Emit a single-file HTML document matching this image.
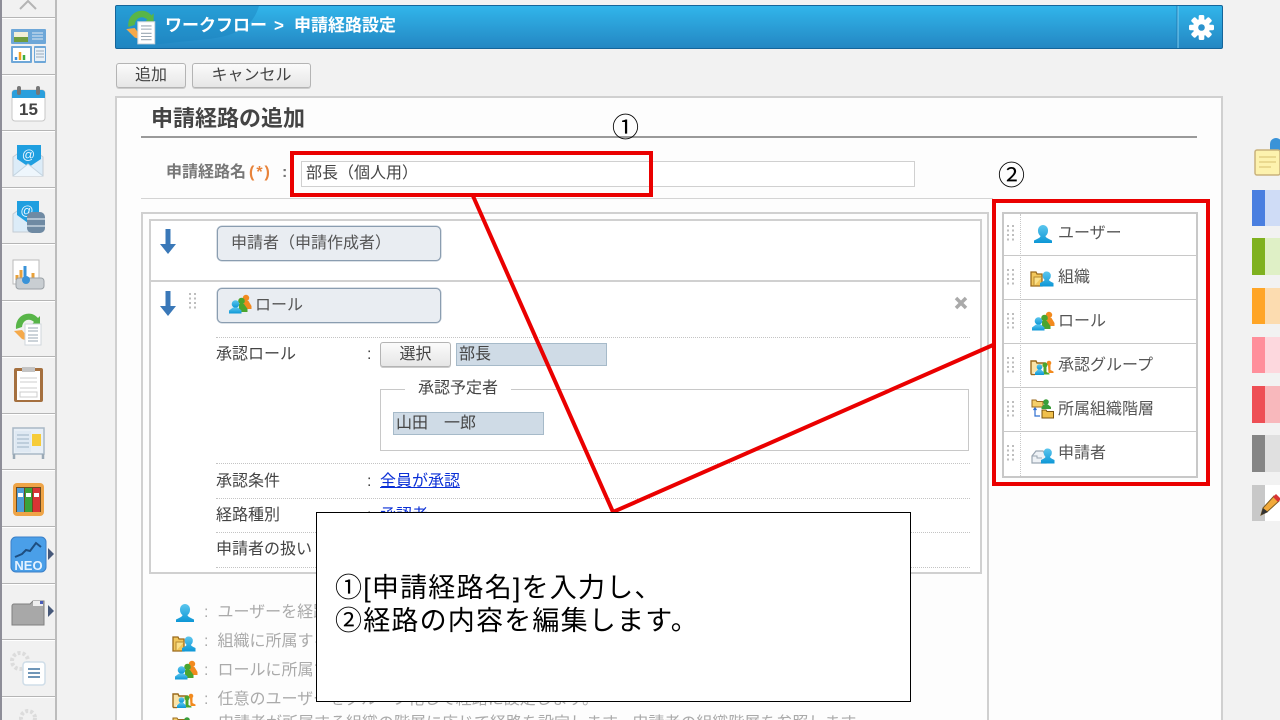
<!DOCTYPE html>
<html lang="ja">
<head>
<meta charset="utf-8">
<title>申請経路設定</title>
<style>
html,body{margin:0;padding:0;width:1280px;height:720px;overflow:hidden;background:#f2f2f2}
body{position:relative;font-family:"Liberation Sans","Noto Sans CJK JP",sans-serif;color:#444;font-size:16px}
.a{position:absolute;white-space:nowrap}
.t{position:absolute;white-space:nowrap;line-height:20px}
.sep{position:absolute;left:2px;width:53px;height:1px;background:#b5b5b5;box-shadow:0 1px 0 #fff}
.btn{position:absolute;box-sizing:border-box;border:1px solid #b4b4b4;border-radius:3px;background:linear-gradient(#fbfbfb,#e6e6e6);text-align:center;color:#444;box-shadow:0 1px 0 #ccc}
.dot{position:absolute;left:0;right:0;height:0;border-top:1px dotted #c4c4c4}
.chip{position:absolute;box-sizing:border-box;left:217px;width:224px;height:35px;background:#e9edf2;border:1px solid #8a9db0;border-radius:5px;box-shadow:0 0 0 .5px #b7c3cf}
.val{position:absolute;box-sizing:border-box;background:#cfdbe6;border:1px solid #a6bac9;height:23px;line-height:21px;padding-left:2px;color:#444;white-space:nowrap}
.row{position:absolute;left:1002px;width:195px;box-sizing:border-box;height:44px;border-bottom:1px solid #c8c8c8}
.row span{position:absolute;left:56px;top:11px;line-height:22px;font-size:16px;color:#555;white-space:nowrap}
.note{position:absolute;left:204px;font-size:16px;line-height:20px;color:#aaa;white-space:nowrap}
.note b{font-weight:normal;margin-left:9px}
svg{position:absolute;overflow:visible}
</style>
</head>
<body>
<svg width="0" height="0" style="position:absolute">
<defs>
<linearGradient id="bl" x1="0" y1="0" x2="0" y2="1"><stop offset="0" stop-color="#5cc6ee"/><stop offset="1" stop-color="#0d97d6"/></linearGradient>
<symbol id="user" viewBox="0 0 20 20"><path d="M10 1a5 5.500 0 0 1 5 6c0 2-1 4-2.500 5 0 1 1 2 6.500 4.500V19H1v-2.500c5.500-2.500 6.500-3.500 6.500-4.500C6 11 5 9 5 7a5 5.500 0 0 1 5-6z" fill="url(#bl)"/></symbol>
<symbol id="org" viewBox="0 0 24 20"><path d="M1 18V4h5l1 2h5v12z" fill="#f2c75c" stroke="#9a6a1c" stroke-width="1.300"/><path d="M4 18V9h8" fill="#fbe08a" stroke="#b58a30"/><path d="M17 3.500a3.800 4 0 0 1 3.800 4.500c0 1.500-.8 3-1.800 3.700 0 .8.700 1.500 4.500 3.300V18.500H10V15c3.800-1.800 4.500-2.500 4.500-3.300-1-.7-1.800-2.200-1.800-3.700A3.800 4 0 0 1 17 3.500z" fill="url(#bl)"/></symbol>
<symbol id="role" viewBox="0 0 24 20"><circle cx="18" cy="4" r="3.200" fill="#f28a1e"/><path d="M15.500 7h5l3 5v3h-8z" fill="#f28a1e"/><circle cx="13.500" cy="7" r="3.300" fill="#4aa52e"/><path d="M11 10h5l3.500 5v3H11z" fill="#4aa52e"/><circle cx="7.500" cy="10" r="3.800" fill="url(#bl)"/><path d="M5 13.500h5l3.500 3V19.500H1v-3z" fill="url(#bl)"/></symbol>
<symbol id="grp" viewBox="0 0 24 20"><path d="M1 18.500V5h5l1 2h8v3" fill="#f9e3a8" stroke="#9a6a1c" stroke-width="1.400"/><path d="M1 18.500h4" stroke="#9a6a1c" stroke-width="1.400"/><circle cx="19" cy="7" r="2.300" fill="#f28a1e"/><path d="M18 9h2.500v5l3 1.500V17h-5z" fill="#f28a1e"/><circle cx="15" cy="9" r="2.500" fill="#4aa52e"/><path d="M13.500 11h3v5l3 1.500v1h-6z" fill="#4aa52e"/><circle cx="9.500" cy="11" r="2.800" fill="url(#bl)"/><path d="M8 13.500h3l3 3v2.500H5v-2.500z" fill="url(#bl)"/></symbol>
<symbol id="hier" viewBox="0 0 24 22"><path d="M1 9V2h4l1 1.500h6V9z" fill="#f5cf6a" stroke="#9a6a1c"/><circle cx="15" cy="4" r="2.800" fill="#3a9e3a"/><path d="M13 6.500h4l3 2.500v2H10.500V9z" fill="#3a9e3a"/><path d="M4 10v8h5M2.500 12L4 10l1.500 2" fill="none" stroke="#2f6fd0" stroke-width="1.200"/><path d="M11 20v-8h4l1 1.500h6.500V20z" fill="#f0c04c" stroke="#7a5410"/></symbol>
<symbol id="appl" viewBox="0 0 24 20"><path d="M1 18v-7l4-5h7l3 5v7z" fill="#eef2f6" stroke="#9aa6b2" stroke-width="1.200"/><path d="M1 11h5v2h5" fill="none" stroke="#9aa6b2"/><path d="M17 3.500a3.800 4 0 0 1 3.800 4.500c0 1.500-.8 3-1.800 3.700 0 .8.700 1.500 4.500 3.300V18.500H10V15c3.800-1.800 4.500-2.500 4.500-3.300-1-.7-1.800-2.200-1.800-3.700A3.800 4 0 0 1 17 3.500z" fill="url(#bl)"/></symbol>
<symbol id="drag" viewBox="0 0 9 16"><g fill="#bdbdbd"><rect x="0" y="0" width="2" height="2"/><rect x="5" y="0" width="2" height="2"/><rect x="0" y="4.500" width="2" height="2"/><rect x="5" y="4.500" width="2" height="2"/><rect x="0" y="9" width="2" height="2"/><rect x="5" y="9" width="2" height="2"/><rect x="0" y="13.500" width="2" height="2"/><rect x="5" y="13.500" width="2" height="2"/></g></symbol>
<symbol id="down" viewBox="0 0 18 26"><path d="M6.500 0h5v15H17L9 25 1 15h5.500z" fill="#3a78b8"/></symbol>
<symbol id="wf" viewBox="0 0 30 36"><path d="M3 18C2 7 11 1 19 3c3 1 5 3 6 4l2-2v9h-9l3-3c-4-4-11-3-12 5z" fill="#58b548"/><path d="M1 20l8-1 4 5 2 6-6-2z" fill="#f5a94a"/><path d="M12 13h16v21H12z" fill="#fff" stroke="#d0d6dc"/><path d="M15 17h10M15 20h10M15 24h10M15 27h10M15 30h10" stroke="#9aa7b3"/></symbol>
</defs>
</svg>

<!-- left rail -->
<div class="a" style="left:0;top:0;width:2px;height:720px;background:#8e8e98"></div>
<div class="a" style="left:2px;top:0;width:53px;height:720px;background:#f1f1f1"></div>
<div class="a" style="left:55px;top:0;width:2px;height:720px;background:#bcbcbc"></div>
<div class="sep" style="top:17px"></div><div class="sep" style="top:74px"></div><div class="sep" style="top:130px"></div><div class="sep" style="top:187px"></div><div class="sep" style="top:243px"></div><div class="sep" style="top:300px"></div><div class="sep" style="top:356px"></div><div class="sep" style="top:413px"></div><div class="sep" style="top:469px"></div><div class="sep" style="top:526px"></div><div class="sep" style="top:583px"></div><div class="sep" style="top:639px"></div><div class="sep" style="top:696px"></div>

<svg style="left:0;top:0" width="57" height="720" viewBox="0 0 57 720">
<path d="M20 9l8-8 8 8" fill="none" stroke="#b4b4b4" stroke-width="2"/>
<!-- portal -->
<rect x="11" y="29" width="35" height="15" rx="1" fill="#6ea7d8"/><rect x="14" y="32" width="14" height="10" fill="#6f9d3e"/><rect x="14" y="32" width="14" height="5" fill="#f2efd8"/><path d="M32 33h11M32 36h11M32 39h11" stroke="#dde9f4"/>
<rect x="11" y="46" width="21" height="17" rx="1" fill="#6ea7d8"/><rect x="13" y="48" width="17" height="13" fill="#fff"/><path d="M16 60v-3" stroke-width="2.500" stroke="#3a8fdc"/><path d="M20 60v-8" stroke="#f0a020" stroke-width="2.500"/><path d="M24 60v-5" stroke="#3fae3f" stroke-width="2.500"/>
<rect x="34" y="46" width="12" height="17" rx="1" fill="#6ea7d8"/><rect x="35" y="48" width="10" height="13" fill="#e8f0f7"/><path d="M36 51h8M36 54h8M36 57h8" stroke="#9ab"/>
<!-- calendar -->
<rect x="12" y="90" width="33" height="31" rx="3" fill="#fff" stroke="#c7c7c7"/><path d="M12 98v-5a3 3 0 0 1 3-3h27a3 3 0 0 1 3 3v5z" fill="#2b9fdc"/><rect x="17" y="86" width="4" height="9" rx="2" fill="#777"/><rect x="36" y="86" width="4" height="9" rx="2" fill="#777"/>
<text x="28.500" y="115" text-anchor="middle" font-family="Liberation Sans" font-size="17" font-weight="bold" fill="#444">15</text>
<!-- mail -->
<path d="M13 176v-19l15-11 15 11v19z" fill="#dcecf8" stroke="#c4ccd4"/><path d="M17 145h24v14l-12 8-12-8z" fill="#1f9fe0"/>
<text x="28.500" y="159" text-anchor="middle" font-family="Liberation Sans" font-size="13" fill="#e8f5ff">@</text>
<path d="M13 176l15-12 15 12" fill="#eef6fc" stroke="#c4d4e0"/>
<!-- mail db -->
<path d="M13 232v-18l15-11 10 8v21z" fill="#dcecf8" stroke="#c4ccd4"/><path d="M17 201h22v14l-11 8-11-8z" fill="#1f9fe0"/>
<text x="27" y="215" text-anchor="middle" font-family="Liberation Sans" font-size="13" fill="#e8f5ff">@</text>
<rect x="27" y="212" width="18" height="21" rx="5" fill="#6f8aa3"/><path d="M27 219h18M27 226h18" stroke="#c5d3df" stroke-width="1.500"/>
<!-- presentation -->
<rect x="13" y="260" width="26" height="24" fill="#fff" stroke="#bbb"/><path d="M17 280v-5M21 280v-10M33 280v-7" stroke="#e8a13a" stroke-width="3"/><path d="M25 280v-14" stroke="#3a93d8" stroke-width="3"/><rect x="16" y="278" width="28" height="11" rx="3" fill="#c9ced2" stroke="#9aa0a5"/><circle cx="26" cy="280" r="4" fill="#3a93d8"/>
<!-- workflow -->
<use href="#wf" x="13" y="311" width="30" height="36"/>
<!-- clipboard -->
<rect x="14" y="368" width="29" height="34" rx="2" fill="#a5703f"/><rect x="17" y="371" width="23" height="29" fill="#fff"/><rect x="22" y="367" width="13" height="5" fill="#c4c4c4"/><path d="M20 378h17M20 382h17M20 388h17" stroke="#ccc"/><rect x="20" y="392" width="17" height="5" fill="none" stroke="#ccc"/>
<!-- board -->
<rect x="13" y="428" width="31" height="26" fill="#e8eff6" stroke="#a9b8c6" stroke-width="1.500"/><path d="M15 431h16v21H15z" fill="#dfe9f3"/><path d="M17 435h12M17 439h12M17 443h12M17 447h12" stroke="#9db3c6"/><rect x="32" y="434" width="9" height="12" fill="#f6cc3a"/><path d="M14 454v5M43 454v5" stroke="#9aa9b6" stroke-width="2.500"/>
<!-- binders -->
<rect x="13" y="483" width="31" height="33" rx="4" fill="#eea447"/><rect x="16" y="487" width="25" height="25" fill="#6b4a20"/><rect x="17" y="488" width="7" height="24" fill="#4f9dd8"/><rect x="25" y="488" width="7" height="24" fill="#3aa23a"/><rect x="33" y="488" width="7" height="24" fill="#d83434"/><path d="M18 495h5M26 495h5M34 495h5" stroke="#fff" stroke-width="4"/>
<!-- neo -->
<rect x="11" y="537" width="35" height="35" rx="5" fill="#4a9fe8" stroke="#3a7fc8"/><path d="M15 557l7-3 4-4 4 1 6-8 5 4" fill="none" stroke="#1e4e80" stroke-width="2"/>
<text x="28.500" y="570" text-anchor="middle" font-family="Liberation Sans" font-size="13" font-weight="bold" fill="#e6f3ff">NEO</text>
<path d="M48 548l6 6-6 6z" fill="#47597a"/>
<!-- folder -->
<path d="M12 625v-19a2 2 0 0 1 2-2h16l3-3h11v24z" fill="#a8a8a8" stroke="#808080"/><rect x="33" y="601" width="10" height="5" fill="#eee"/><rect x="40" y="601" width="3" height="3" fill="#4a5cb8"/><path d="M48 605l6 6-6 6z" fill="#47597a"/>
<!-- settings list -->
<circle cx="20" cy="661" r="8" fill="none" stroke="#dcdcdc" stroke-width="4" stroke-dasharray="3 2"/><rect x="23" y="662" width="22" height="23" rx="3" fill="#fff" stroke="#cfdde8" stroke-width="1.500"/><path d="M28 669h12M28 673h12M28 677h12" stroke="#6f96b8" stroke-width="2"/>
<circle cx="28" cy="718" r="7" fill="none" stroke="#dcdcdc" stroke-width="4" stroke-dasharray="3 2"/>
</svg>

<!-- header -->
<div class="a" style="left:115px;top:5px;width:1108px;height:44px;box-sizing:border-box;border:1px solid #15659a;border-radius:2px;background:linear-gradient(#31b5ea,#2487c3);overflow:hidden">
  <svg style="left:0;top:0" width="1108" height="44"><path d="M0 0h143c-6 20-20 29-50 33-30 3-60 6-93 10z" fill="#1b82bf" opacity=".45"/><path d="M1062 0v44" stroke="#7fd0f2"/><path d="M1061 0v44" stroke="#1f7db5"/></svg>
</div>
<svg style="left:125px;top:8px" width="32" height="38"><use href="#wf" width="32" height="38"/></svg>
<div class="a" style="left:165px;top:14px;line-height:24px;font-size:17px;font-weight:bold;color:#fff">ワークフロー</div>
<div class="a" style="left:274px;top:14px;line-height:24px;font-size:17px;font-weight:bold;color:#fff">&gt;</div>
<div class="a" style="left:294px;top:14px;line-height:24px;font-size:17px;font-weight:bold;color:#fff">申請経路設定</div>
<svg style="left:1187px;top:13px" width="29" height="29" viewBox="-14.500 -14.500 29 29"><g fill="#fff"><circle r="8.500"/><g><rect x="-2.800" y="-12.500" width="5.600" height="25" rx="1.500"/><rect x="-2.800" y="-12.500" width="5.600" height="25" rx="1.500" transform="rotate(45)"/><rect x="-2.800" y="-12.500" width="5.600" height="25" rx="1.500" transform="rotate(90)"/><rect x="-2.800" y="-12.500" width="5.600" height="25" rx="1.500" transform="rotate(135)"/></g></g><circle r="3.300" fill="#2b93cd"/></svg>

<!-- toolbar -->
<div class="btn" style="left:116px;top:63px;width:70px;height:25px;line-height:24px;font-size:16px">追加</div>
<div class="btn" style="left:192px;top:63px;width:119px;height:25px;line-height:24px;font-size:16px">キャンセル</div>

<!-- panel -->
<div class="a" style="left:115px;top:96px;width:1108px;height:640px;box-sizing:border-box;border:2px solid #d0d0d0;background:#fdfdfd"></div>
<div class="t" style="left:151px;top:106px;font-size:22px;line-height:26px;font-weight:bold;color:#444">申請経路の追加</div>
<div class="a" style="left:141px;top:136px;width:1056px;height:2px;background:#9a9a9a"></div>
<div class="t" style="left:166px;top:163px;font-size:16px;font-weight:bold;color:#777">申請経路名</div>
<div class="t" style="left:249px;top:163px;font-size:16px;font-weight:bold;color:#e8833a;letter-spacing:2px">(*)</div>
<div class="t" style="left:282px;top:163px;font-size:16px;font-weight:bold;color:#777">:</div>
<div class="a" style="left:301px;top:161px;width:614px;height:26px;box-sizing:border-box;border:1px solid #d0d0d0;background:#fff;line-height:23px;padding-left:4px;font-size:16px;color:#444">部長（個人用）</div>
<div class="a" style="left:141px;top:198px;width:852px;height:1px;background:#d4d4d4"></div>

<!-- outer + inner flow boxes -->
<div class="a" style="left:141px;top:212px;width:848px;height:520px;box-sizing:border-box;border:2px solid #d0d0d0;border-bottom:0"></div>
<div class="a" style="left:149px;top:219px;width:833px;height:355px;box-sizing:border-box;border:2px solid #d0d0d0;background:#fff"></div>
<div class="a" style="left:151px;top:280px;width:829px;height:2px;background:#d0d0d0"></div>

<svg style="left:159px;top:229px" width="18" height="26"><use href="#down" width="18" height="26"/></svg>
<div class="chip" style="top:226px"><div class="t" style="left:13px;top:7px;font-size:16px;color:#555">申請者（申請作成者）</div></div>
<svg style="left:159px;top:291px" width="18" height="26"><use href="#down" width="18" height="26"/></svg>
<svg style="left:189px;top:293px" width="9" height="16"><use href="#drag" width="9" height="16"/></svg>
<div class="chip" style="top:288px"><svg style="left:10px;top:5px" width="24" height="20"><use href="#role" width="24" height="20"/></svg><div class="t" style="left:37px;top:7px;font-size:16px;color:#555">ロール</div></div>
<svg style="left:954px;top:296px" width="14" height="14"><path d="M2 2l10 10M12 2L2 12" stroke="#aaa" stroke-width="3.500"/></svg>

<div class="a" style="left:216px;top:337px;width:754px"><div class="dot"></div></div>
<div class="t" style="left:216px;top:345px">承認ロール</div>
<div class="t" style="left:367px;top:345px">:</div>
<div class="btn" style="left:380px;top:342px;width:71px;height:25px;line-height:24px">選択</div>
<div class="val" style="left:456px;top:343px;width:151px">部長</div>

<div class="a" style="left:380px;top:389px;width:589px;height:62px;box-sizing:border-box;border:1.500px solid #c8c8c8"></div>
<div class="t" style="left:405px;top:379px;padding:0 13px;background:#fff">承認予定者</div>
<div class="val" style="left:393px;top:412px;width:151px">山田　一郎</div>

<div class="a" style="left:216px;top:463px;width:754px"><div class="dot"></div></div>
<div class="t" style="left:216px;top:472px">承認条件</div>
<div class="t" style="left:367px;top:472px">:</div>
<div class="t" style="left:380px;top:472px;color:#0a2fd6;text-decoration:underline">全員が承認</div>
<div class="a" style="left:216px;top:498px;width:754px"><div class="dot"></div></div>
<div class="t" style="left:216px;top:506px">経路種別</div>
<div class="t" style="left:367px;top:506px">:</div>
<div class="t" style="left:380px;top:506px;color:#0a2fd6;text-decoration:underline">承認者</div>
<div class="a" style="left:216px;top:532px;width:754px"><div class="dot"></div></div>
<div class="t" style="left:216px;top:540px">申請者の扱い</div>
<div class="a" style="left:216px;top:567px;width:754px"><div class="dot"></div></div>

<!-- legend -->
<svg style="left:175px;top:603px" width="20" height="20"><use href="#user" width="20" height="20"/></svg>
<div class="note" style="top:603px">:<b>ユーザーを経路に追加します。</b></div>
<svg style="left:172px;top:633px" width="24" height="20"><use href="#org" width="24" height="20"/></svg>
<div class="note" style="top:632px">:<b>組織に所属するユーザーを追加します。</b></div>
<svg style="left:174px;top:660px" width="24" height="20"><use href="#role" width="24" height="20"/></svg>
<div class="note" style="top:661px">:<b>ロールに所属するユーザーを追加します。</b></div>
<svg style="left:172px;top:689px" width="24" height="20"><use href="#grp" width="24" height="20"/></svg>
<div class="note" style="top:690px">:<b>任意のユーザーをグループ化して経路に設定します。</b></div>
<svg style="left:172px;top:716px" width="24" height="22"><use href="#hier" width="24" height="22"/></svg>
<div class="note" style="top:714px;left:218px">申請者が所属する組織の階層に応じて経路を設定します。申請者の組織階層を参照します。</div>

<!-- right palette -->
<div class="a" style="left:1002px;top:212px;width:196px;height:266px;box-sizing:border-box;border:2px solid #c8c8c8;background:#fff"></div>
<div class="row" style="top:212px"><span>ユーザー</span></div>
<div class="row" style="top:256px"><span>組織</span></div>
<div class="row" style="top:300px"><span>ロール</span></div>
<div class="row" style="top:344px"><span>承認グループ</span></div>
<div class="row" style="top:388px"><span>所属組織階層</span></div>
<div class="row" style="top:432px;border-bottom:0"><span>申請者</span></div>
<div class="a" style="left:1020px;top:214px;height:262px;border-left:1px dotted #c8c8c8"></div>
<svg style="left:1007px;top:225px" width="9" height="16"><use href="#drag" width="9" height="16"/></svg>
<svg style="left:1007px;top:269px" width="9" height="16"><use href="#drag" width="9" height="16"/></svg>
<svg style="left:1007px;top:313px" width="9" height="16"><use href="#drag" width="9" height="16"/></svg>
<svg style="left:1007px;top:357px" width="9" height="16"><use href="#drag" width="9" height="16"/></svg>
<svg style="left:1007px;top:401px" width="9" height="16"><use href="#drag" width="9" height="16"/></svg>
<svg style="left:1007px;top:445px" width="9" height="16"><use href="#drag" width="9" height="16"/></svg>
<svg style="left:1033px;top:224px" width="20" height="20"><use href="#user" width="20" height="20"/></svg>
<svg style="left:1030px;top:268px" width="24" height="20"><use href="#org" width="24" height="20"/></svg>
<svg style="left:1031px;top:311px" width="24" height="20"><use href="#role" width="24" height="20"/></svg>
<svg style="left:1030px;top:356px" width="24" height="20"><use href="#grp" width="24" height="20"/></svg>
<svg style="left:1030px;top:398px" width="26" height="22"><use href="#hier" width="26" height="22"/></svg>
<svg style="left:1030px;top:445px" width="26" height="20"><use href="#appl" width="26" height="20"/></svg>

<!-- far right colour tabs -->
<svg style="left:1240px;top:130px" width="40" height="400" viewBox="0 0 40 400">
<rect x="30" y="8" width="12" height="30" rx="6" fill="#3a93d8"/>
<rect x="15" y="20" width="25" height="25" rx="2" fill="#fdf2ae" stroke="#c9b27c" stroke-width="1.500"/><path d="M19 27h17M19 32h17M19 37h12" stroke="#d6c070"/>
<rect x="12" y="60" width="28" height="36" fill="#cfdcf6"/><rect x="12" y="60" width="13" height="36" fill="#4a7fe0"/>
<rect x="12" y="108" width="28" height="37" fill="#dff0c6"/><rect x="12" y="108" width="13" height="37" fill="#7fb11f"/>
<rect x="12" y="158" width="28" height="36" fill="#fcdcb0"/><rect x="12" y="158" width="13" height="36" fill="#ffa526"/>
<rect x="12" y="207" width="28" height="36" fill="#fdd8de"/><rect x="12" y="207" width="13" height="36" fill="#ff8f9b"/>
<rect x="12" y="256" width="28" height="37" fill="#f8b8bc"/><rect x="12" y="256" width="13" height="37" fill="#ee4f55"/>
<rect x="12" y="305" width="28" height="37" fill="#e0e0e0"/><rect x="12" y="305" width="13" height="37" fill="#858585"/>
<rect x="12" y="355" width="28" height="36" fill="#fff"/><rect x="12" y="355" width="13" height="36" fill="#c8c8c8"/>
<path d="M21 385l2-7 11-12 5 5-12 11z" fill="#f1a93a" stroke="#7a5a20"/><path d="M33 367l3-3 5 5-3 3z" fill="#d83434"/><path d="M21 385l2-7 5 4z" fill="#333"/>
</svg>

<!-- annotations -->
<div class="a" style="left:290px;top:151px;width:363px;height:46px;box-sizing:border-box;border:4px solid #ea0000"></div>
<div class="a" style="left:992px;top:199px;width:218px;height:287px;box-sizing:border-box;border:4px solid #ea0000"></div>
<svg style="left:0;top:0" width="1280" height="720"><path d="M473 196L613 512L993 345" fill="none" stroke="#ea0000" stroke-width="4"/></svg>
<div class="a" style="left:612px;top:112px;font-size:27px;line-height:32px;color:#000">①</div>
<div class="a" style="left:998px;top:160px;font-size:27px;line-height:32px;color:#000">②</div>
<div class="a" style="left:316px;top:512px;width:595px;height:190px;box-sizing:border-box;border:1px solid #000;background:#fff"></div>
<div class="a" style="left:335px;top:572px;font-size:27px;line-height:33px;letter-spacing:1.200px;color:#000">①[申請経路名]を入力し、<br>②経路の内容を編集します。</div>
</body>
</html>
